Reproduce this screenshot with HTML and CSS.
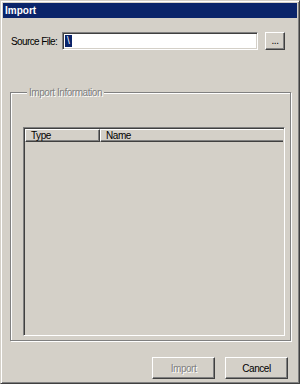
FILE: index.html
```html
<!DOCTYPE html>
<html>
<head>
  <title>Import</title>
  <link rel="stylesheet" href="styles.css">
</head>
<body>
  <div class="window">
    <div class="titlebar">Import</div>

    <div class="content">
      <div class="source-row">
        <span class="label">Source File:</span>
        <div class="textbox"><span class="sel">\</span></div>
        <button class="btn browse">...</button>
      </div>

      <div class="group">
        <span class="legend">Import Information</span>
        <div class="listview">
          <div class="lv-header">
            <div class="lv-col col-type">Type</div>
            <div class="lv-col col-name">Name</div>
          </div>
        </div>
      </div>

      <div class="actions">
        <button class="btn" disabled>Import</button>
        <button class="btn">Cancel</button>
      </div>
    </div>
  </div>
</body>
</html>
```

FILE: styles.css
```css
html, body {
  margin: 0;
  padding: 0;
  background: #d4d0c8;
}
body {
  font-family: 'Liberation Sans', Arial, sans-serif;
  font-size: 10px;
  letter-spacing: -0.45px;
  color: #000;
}

.window {
  box-sizing: border-box;
  width: 300px;
  height: 384px;
  display: flex;
  flex-direction: column;
  background: #d4d0c8;
  border: 1px solid;
  border-color: #d4d0c8 #404040 #404040 #d4d0c8;
  box-shadow: inset 1px 1px #fff, inset -1px -1px #808080;
  padding: 2px;
}

.titlebar {
  height: 15px;
  line-height: 15px;
  background: #0a246a;
  color: #fff;
  font-weight: bold;
  font-size: 10px;
  letter-spacing: 0;
  padding-left: 2px;
}

.content {
  flex: 1;
  display: flex;
  flex-direction: column;
  padding: 14px 9px 2px 7px;
}

.source-row {
  display: flex;
  align-items: center;
  height: 18px;
}
.label {
  width: 52px;
  padding-left: 1px;
  letter-spacing: -0.6px;
  box-sizing: border-box;
}
.textbox {
  box-sizing: border-box;
  width: 196px;
  height: 18px;
  background: #fff;
  border: 1px solid;
  border-color: #808080 #fff #fff #808080;
  box-shadow: inset 1px 1px #404040, inset -1px -1px #d4d0c8;
  padding: 2px 0 0 2px;
  line-height: 12px;
}
.sel {
  display: inline-block;
  background: #0a246a;
  color: #fff;
  padding: 0 2px;
  letter-spacing: 0;
  font-size: 10px;
}

.btn {
  box-sizing: border-box;
  font-family: inherit;
  font-size: 10px;
  letter-spacing: -0.45px;
  color: #000;
  background: #d4d0c8;
  border: 1px solid;
  border-color: #fff #404040 #404040 #fff;
  box-shadow: inset -1px -1px #808080, inset 1px 1px #d4d0c8;
  padding: 0;
  margin: 0;
}
.btn:disabled {
  color: #808080;
  text-shadow: 1px 1px #fff;
}
.browse {
  width: 20px;
  height: 18px;
  margin-left: 7px;
  line-height: 12px;
}

.group {
  flex: 1;
  display: flex;
  flex-direction: column;
  margin: 42px 0 0 0;
  width: 281px;
  box-sizing: border-box;
  border: 1px solid #808080;
  box-shadow: inset 1px 1px #fff, 1px 1px #fff;
  padding: 0 5px 4px 12px;
}
.legend {
  align-self: flex-start;
  margin: -7px 0 0 4px;
  padding: 0 2px;
  line-height: 13px;
  background: #d4d0c8;
  color: #808080;
  text-shadow: 1px 1px #fff;
}

.listview {
  flex: 1;
  margin-top: 28px;
  border: 1px solid;
  border-color: #808080 #fff #fff #808080;
  box-shadow: inset 1px 1px #404040, inset -1px -1px #d4d0c8;
  padding: 1px;
}
.lv-header {
  display: flex;
  height: 13px;
}
.lv-col {
  box-sizing: border-box;
  height: 13px;
  line-height: 12px;
  padding-left: 5px;
  border: 1px solid;
  border-color: #fff #404040 #404040 #fff;
  box-shadow: inset -1px -1px #808080;
}
.col-type { width: 75px; }
.col-name { flex: 1; border-right: 0; box-shadow: inset 0 -1px #808080; }

.actions {
  display: flex;
  justify-content: flex-end;
  gap: 10px;
  margin-top: 16px;
}
.actions .btn {
  width: 63px;
  height: 22px;
}
```
